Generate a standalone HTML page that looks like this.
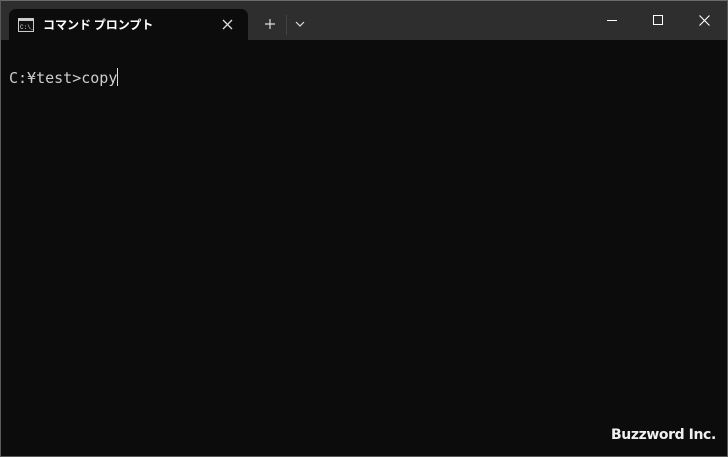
<!DOCTYPE html>
<html><head><meta charset="utf-8"><style>
*{margin:0;padding:0;box-sizing:border-box}
html,body{width:728px;height:457px;overflow:hidden}
body{background:#0c0c0c;position:relative;font-family:"Liberation Sans","Noto Sans CJK JP",sans-serif}
.frame{position:absolute;left:0;top:0;width:728px;height:457px;border:1px solid #5a5a5a;border-top-color:#6a6a6a;pointer-events:none}
.bar{position:absolute;left:0;top:0;width:728px;height:40px;background:#2e2e2e}
.tab{position:absolute;left:9px;top:9px;width:239px;height:32px;background:#0c0c0c;border-radius:7px 7px 0 0}
.title{position:absolute;left:43px;top:17px;color:#fff;font-size:12px;font-weight:bold;font-family:"Noto Sans CJK JP",sans-serif;line-height:16px}
.term{position:absolute;left:9px;top:68px;color:#cccccc;font-family:"DejaVu Sans Mono","Noto Sans CJK JP",monospace;font-size:15px;line-height:20px;letter-spacing:0;white-space:nowrap}
.cur{display:inline-block;width:1px;height:18px;background:#ddd;vertical-align:-3px}
.logo{position:absolute;left:611px;top:427px;color:#f0f0f0;font-size:14px;font-weight:bold;font-family:"DejaVu Sans",sans-serif;letter-spacing:-0.4px;white-space:nowrap}
</style></head><body>
<div class="bar"></div>
<div class="tab"></div>
<svg style="position:absolute;left:18px;top:18px" width="16" height="14"><rect x="0.5" y="0.5" width="15" height="13" fill="#111" stroke="#ccc"/><rect x="1" y="1" width="14" height="2" fill="#ccc"/><text x="2" y="11" font-size="6" fill="#ddd" font-family="Liberation Mono">C:\_</text></svg>
<div class="title">コマンド プロンプト</div>
<svg style="position:absolute;left:222px;top:19px" width="11" height="11"><path d="M1 1L10 10M10 1L1 10" stroke="#ddd" stroke-width="1.3"/></svg>
<svg style="position:absolute;left:264px;top:18px" width="12" height="12"><path d="M6 1V11M1 6H11" stroke="#ddd" stroke-width="1.2"/></svg>
<div style="position:absolute;left:286px;top:15px;width:1px;height:20px;background:#444"></div>
<svg style="position:absolute;left:295px;top:21px" width="10" height="6"><path d="M1 1L5 5L9 1" stroke="#ddd" fill="none" stroke-width="1.2"/></svg>
<div style="position:absolute;left:607px;top:20px;width:10px;height:1px;background:#fff"></div>
<div style="position:absolute;left:653px;top:15px;width:10px;height:10px;border:1px solid #fff"></div>
<svg style="position:absolute;left:699px;top:15px" width="11" height="11"><path d="M0.5 0.5L10.5 10.5M10.5 0.5L0.5 10.5" stroke="#fff" stroke-width="1.1"/></svg>
<div class="term">C:¥test&gt;copy<span class="cur"></span></div>
<div class="logo">Buzzword Inc.</div>
<div class="frame"></div>
</body></html>
